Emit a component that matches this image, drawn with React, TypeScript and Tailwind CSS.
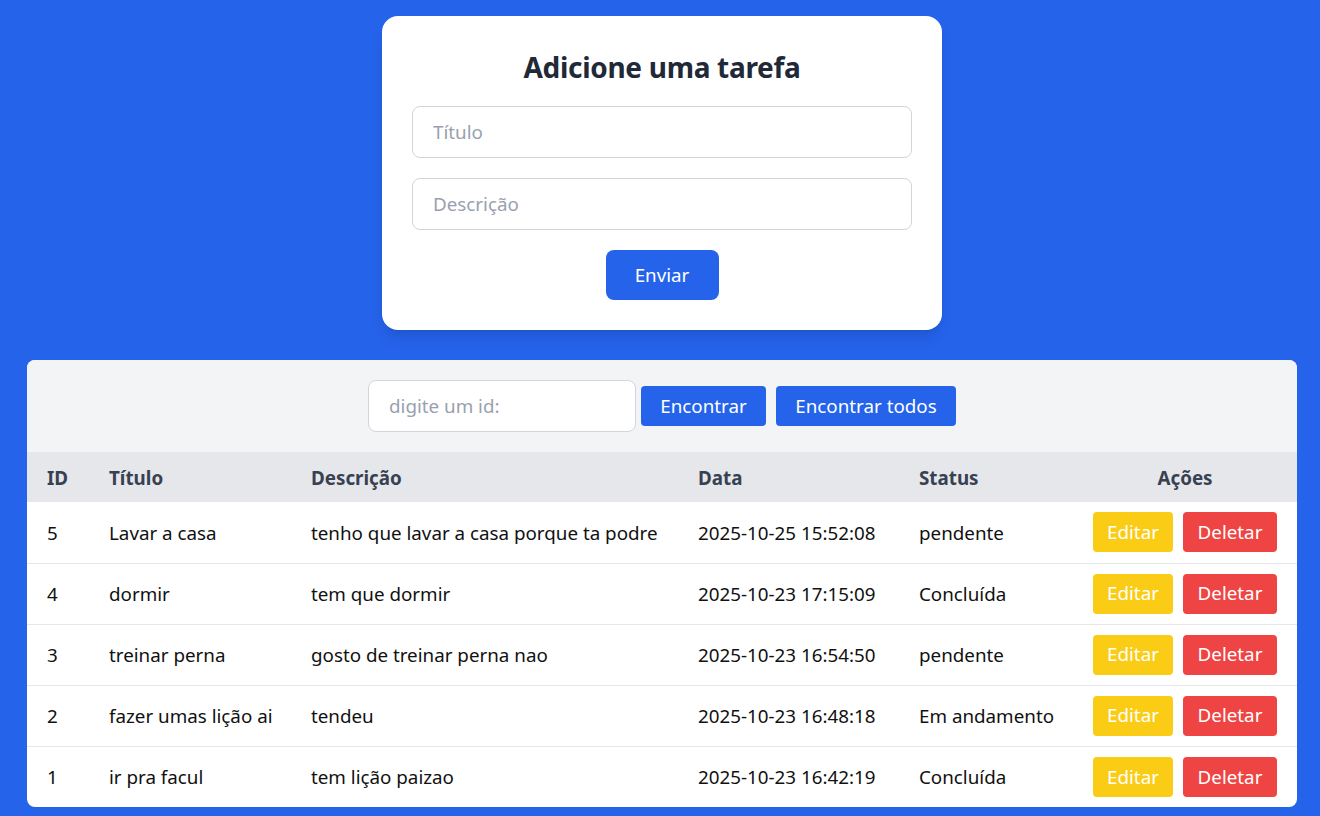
import React from "react";

const rows = [
  { id: 5, t: "Lavar a casa", d: "tenho que lavar a casa porque ta podre", dt: "2025-10-25 15:52:08", s: "pendente" },
  { id: 4, t: "dormir", d: "tem que dormir", dt: "2025-10-23 17:15:09", s: "Concluída" },
  { id: 3, t: "treinar perna", d: "gosto de treinar perna nao", dt: "2025-10-23 16:54:50", s: "pendente" },
  { id: 2, t: "fazer umas lição ai", d: "tendeu", dt: "2025-10-23 16:48:18", s: "Em andamento" },
  { id: 1, t: "ir pra facul", d: "tem lição paizao", dt: "2025-10-23 16:42:19", s: "Concluída" },
];

export default function App() {
  return (
    <div
      className="min-h-[816px] w-full bg-[#2563eb] pt-4 pl-1 pb-[9px] flex flex-col items-center"
      style={{ fontFamily: '"Noto Sans", "Open Sans", sans-serif' }}
    >
      <div className="w-[560px] bg-white rounded-2xl shadow-lg px-[30px] pt-[33px] pb-[30px] flex flex-col items-center">
        <h1 className="text-[28px] leading-[36px] font-bold text-[#1f2937] mb-[21px] tracking-[-0.3px]">Adicione uma tarefa</h1>
        <input
          placeholder="Título"
          className="w-full h-[52px] border border-gray-300 rounded-lg px-5 text-[18.8px] text-gray-800 placeholder:text-gray-400 outline-none"
        />
        <input
          placeholder="Descrição"
          className="w-full h-[52px] border border-gray-300 rounded-lg px-5 text-[18.8px] text-gray-800 placeholder:text-gray-400 outline-none mt-5"
        />
        <button className="mt-5 w-[113px] h-[50px] bg-[#2563eb] text-white text-[18.8px] rounded-lg">Enviar</button>
      </div>

      <div className="mt-[30px] w-[1270px] bg-white rounded-lg overflow-hidden">
        <div className="bg-gray-100 h-[92px] flex items-center justify-center">
          <input
            placeholder="digite um id:"
            className="w-[268px] h-[52px] bg-white border border-gray-300 rounded-lg px-5 text-[18.8px] placeholder:text-gray-400 outline-none"
          />
          <button className="ml-[5px] w-[125px] h-10 bg-[#2563eb] text-white text-[18.8px] rounded">Encontrar</button>
          <button className="ml-[10px] w-[180px] h-10 bg-[#2563eb] text-white text-[18.8px] rounded">Encontrar todos</button>
        </div>
        <table className="w-full table-fixed border-collapse text-[18.8px]">
          <colgroup>
            <col className="w-[62px]" />
            <col className="w-[202px]" />
            <col className="w-[387px]" />
            <col className="w-[221px]" />
            <col className="w-[174px]" />
            <col className="w-[224px]" />
          </colgroup>
          <thead>
            <tr className="bg-gray-200 h-[50px] text-[#374151]">
              <th className="text-left font-bold pl-5 pt-[2px]">ID</th>
              <th className="text-left font-bold pl-5 pt-[2px]">Título</th>
              <th className="text-left font-bold pl-5 pt-[2px]">Descrição</th>
              <th className="text-left font-bold pl-5 pt-[2px]">Data</th>
              <th className="text-left font-bold pl-5 pt-[2px]">Status</th>
              <th className="text-center font-bold pt-[2px]">Ações</th>
            </tr>
          </thead>
          <tbody className="text-[#111]">
            {rows.map((r, i) => (
              <tr key={r.id} className={i < rows.length - 1 ? "h-[61px] border-b border-gray-200" : "h-[61px]"}>
                <td className="pl-5 pt-[1px] whitespace-nowrap">{r.id}</td>
                <td className="pl-5 pt-[1px] whitespace-nowrap">{r.t}</td>
                <td className="pl-5 pt-[1px] whitespace-nowrap">{r.d}</td>
                <td className="pl-5 pt-[1px] whitespace-nowrap">{r.dt}</td>
                <td className="pl-5 pt-[1px] whitespace-nowrap">{r.s}</td>
                <td className="px-5">
                  <div className="flex gap-[10px]">
                    <button className="w-20 h-10 bg-[#facc15] text-white rounded">Editar</button>
                    <button className="w-[94px] h-10 bg-[#ef4444] text-white rounded">Deletar</button>
                  </div>
                </td>
              </tr>
            ))}
          </tbody>
        </table>
      </div>
    </div>
  );
}
